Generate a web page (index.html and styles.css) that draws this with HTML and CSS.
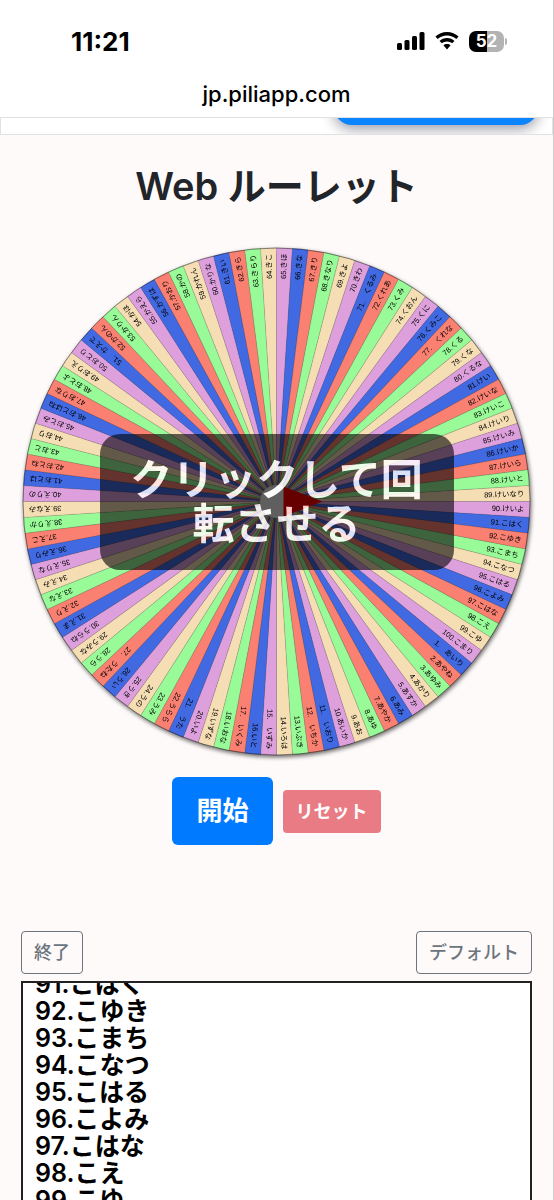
FILE: index.html
```
<!DOCTYPE html>
<html lang="ja">
<head>
  <meta charset="UTF-8">
  <meta name="viewport" content="width=device-width, initial-scale=1.0">
  <title>Web ルーレット</title>
  <link rel="stylesheet" href="styles.css">
</head>
<body>
  <header>
    <div class="status">
      <span class="time">11:21</span>
      <div class="icons">
        <svg width="28" height="20" viewBox="0 0 28 20" aria-hidden="true">
          <rect x="0" y="12" width="5" height="7" rx="1.5"/>
          <rect x="7.5" y="9" width="5" height="10" rx="1.5"/>
          <rect x="15" y="5" width="5" height="14" rx="1.5"/>
          <rect x="22.5" y="1" width="5" height="18" rx="1.5"/>
        </svg>
        <svg width="24" height="20" viewBox="0 0 24 20" aria-hidden="true">
          <path d="M12 1C7.500 1 3.400 2.700.4 5.600L2.700 8C5.200 5.700 8.400 4.400 12 4.400S18.800 5.700 21.300 8L23.600 5.600C20.600 2.700 16.500 1 12 1Z"/>
          <path d="M12 7.100C9.100 7.100 6.500 8.200 4.500 10L6.900 12.300C8.300 11.100 10 10.400 12 10.400S15.700 11.100 17.100 12.300L19.500 10C17.500 8.200 14.900 7.100 12 7.100Z"/>
          <path d="M12 13C10.600 13 9.400 13.500 8.400 14.300L12 18.500L15.600 14.300C14.600 13.500 13.400 13 12 13Z"/>
        </svg>
        <span class="battery">52</span>
      </div>
    </div>
    <p class="url">jp.piliapp.com</p>
  </header>
  <div class="ad"><a class="ad-link" href="#" aria-label="広告"></a></div>
  <main>
    <h1>Web ルーレット</h1>
    <div class="roulette">
      <svg class="wheel" viewBox="-512 -512 1024 1024">
        <g id="slices"></g>
        <circle class="edge" r="508"/>
        <circle class="hub" r="33"/>
        <path class="pointer" d="M14 -30L92 0L14 30Z"/>
      </svg>
      <button class="spin" type="button">クリックして回転させる</button>
    </div>
    <div class="actions">
      <button class="start" type="button">開始</button>
      <button class="reset" type="button">リセット</button>
    </div>
    <div class="tools">
      <button class="outline" type="button">終了</button>
      <button class="outline" type="button">デフォルト</button>
    </div>
    <textarea id="names" aria-label="項目" spellcheck="false"></textarea>
  </main>
  <script src="script.js"></script>
</body>
</html>
```
FILE: styles.css
```
*{
  box-sizing: border-box;
}
body{
  margin: 0;
  height: 100vh;
  overflow: hidden;
  background-color: #fffafa;
  border-right: 1px solid #ccc;
  font-family: Inter, "Noto Sans CJK JP", sans-serif;
  color: #212529;
}
button{
  font-family: inherit;
  cursor: pointer;
}
/* ステータスバー */
header{
  height: 117px;
  padding-top: 24px;
  background-color: white;
  color: black;
}
.status{
  display: flex;
  justify-content: space-between;
  align-items: center;
  height: 34px;
  padding: 0 49px 0 71px;
}
.time{
  font-size: 26px;
  font-weight: 700;
}
.icons{
  display: flex;
  align-items: center;
  gap: 10px;
}
.battery{
  position: relative;
  width: 35px;
  height: 21px;
  border-radius: 7px;
  background: linear-gradient(to right, black 52%, #b3b3b3 52%);
  color: white;
  font-size: 17px;
  font-weight: 700;
  line-height: 21px;
  text-align: center;
}
.battery::after{
  content: "";
  position: absolute;
  left: 36px;
  top: 7px;
  width: 2px;
  height: 7px;
  border-radius: 0 2px 2px 0;
  background-color: #b3b3b3;
}
.url{
  margin: 20px 0 0;
  font-size: 22px;
  font-weight: 500;
  line-height: 32px;
  text-align: center;
}
/* 広告 */
.ad{
  display: flex;
  justify-content: flex-end;
  height: 18px;
  padding-right: 14px;
  overflow: hidden;
  background-color: white;
  border: 1px solid #e2e2e4;
}
.ad-link{
  width: 38%;
  height: 60px;
  margin-top: -53px;
  border-radius: 18px;
  background-color: #0a84ff;
  box-shadow: 0 4px 14px rgba(0, 0, 40, .4);
}
main{
  padding: 0 21px;
}
h1{
  margin: 27px 0 36px;
  font-size: 38px;
  font-weight: 600;
  line-height: 48px;
  text-align: center;
}
/* ルーレット */
.roulette{
  position: relative;
}
.wheel{
  display: block;
  width: 100%;
  overflow: visible;
  filter: drop-shadow(1px 2px 2px rgba(0, 0, 0, .6));
}
.slice{
  stroke: rgba(0, 0, 0, .2);
  stroke-width: 1;
}
.label{
  font-family: "Liberation Sans", "Noto Sans CJK JP", sans-serif;
  font-size: 15px;
  fill: black;
  text-anchor: end;
  dominant-baseline: central;
  white-space: pre;
}
.edge{
  fill: none;
  stroke: rgba(0, 0, 0, .4);
  stroke-width: 2;
}
.hub{
  fill: #eee;
}
.pointer{
  fill: red;
}
.spin{
  position: absolute;
  top: 50%;
  left: 50%;
  width: 354px;
  padding: 24px;
  transform: translate(-50%, -50%);
  border: none;
  border-radius: 20px;
  background-color: rgba(0, 0, 0, .75);
  color: white;
  opacity: .8;
  font-size: 42px;
  font-weight: 600;
  line-height: 44px;
}
.actions{
  display: flex;
  justify-content: center;
  align-items: center;
  gap: 10px;
  margin-top: 20px;
}
.start{
  padding: 14px 24px;
  border: none;
  border-radius: 6px;
  background-color: #007bff;
  color: white;
  font-size: 26px;
  font-weight: 600;
  line-height: 40px;
}
.reset{
  padding: 8px 13px;
  border: none;
  border-radius: 4px;
  background-color: #e97b85;
  color: white;
  font-size: 18px;
  font-weight: 600;
  line-height: 27px;
}
.tools{
  display: flex;
  justify-content: space-between;
  margin: 86px 0 7px;
}
.outline{
  padding: 7px 12px;
  border: 1px solid #6c757d;
  border-radius: 4px;
  background-color: transparent;
  color: #6c757d;
  font-size: 18px;
  font-weight: 500;
  line-height: 27px;
}
/* 項目リスト */
#names{
  display: block;
  width: 100%;
  height: 240px;
  padding: 8px 12px;
  border: 2px solid #222;
  border-radius: 0;
  outline: none;
  resize: none;
  scrollbar-width: none;
  background-color: white;
  color: black;
  font-family: inherit;
  font-size: 25px;
  font-weight: 600;
  line-height: 27px;
}
```
FILE: script.js
```
const names=[
  "　あいり","あやね","あゆみ","あかり","あすか","あみ","あやか","あゆ","あお","あいか",
  "　いおり","　いちか","いぶき","いろは","　いずみ","いと","　いくみ","いおな","いずな","いよ",
  "　うた","うらら","うみ","うの","うき","うい","　うたね","うら","うみな","うらね",
  "えま","えり","えな","えみ","えりな","えみり","えこ","えりか","えなみ","えりの",
  "おとは","おとね","おと","おり","おとみ","おとはね","おりな","おとよ","おりえ","おとり",
  "　かえで","かのん","かりん","かほ","かえら","かずは","かおり","かの","かれん","かりな",
  "きい","きら","きらり","きこ","きほ","きな","きり","きなり","きよ","きわ",
  "　くるみ","くれあ","くみ","くおん","くに","くみこ","　くれな","くる","くな","くるな",
  "けい","けいな","けいこ","けいり","けいみ","けいか","けいら","けいと","けいなり","けいよ",
  "こはく","こゆき","こまち","こなつ","こはる","こよみ","こはな","こえ","こゆ","こまり"
]
const colors=["plum","royalblue","salmon","palegreen","wheat"]
const svgNS="http://www.w3.org/2000/svg"
const slices=document.querySelector("#slices")
const list=document.querySelector("#names")

const R=508
const step=360/names.length
const half=step/2*Math.PI/180
const x=R*Math.cos(half)
const y=R*Math.sin(half)

// ルーレットの項目を描く
names.forEach((name,i)=>{
  const num=i+1
  const g=document.createElementNS(svgNS,"g")
  g.setAttribute("transform",`rotate(${(num-90+0.5)*step})`)

  const slice=document.createElementNS(svgNS,"path")
  slice.setAttribute("class","slice")
  slice.setAttribute("d",`M0 0L${x} ${-y}A${R} ${R} 0 0 1 ${x} ${y}Z`)
  slice.setAttribute("fill",colors[num%5])
  g.appendChild(slice)

  const label=document.createElementNS(svgNS,"text")
  label.setAttribute("class","label")
  label.setAttribute("x",497)
  label.textContent=`${num}.${name}`
  g.appendChild(label)

  slices.appendChild(g)
})

// リストを最後の方までスクロール
list.value=names.map((name,i)=>`${i+1}.${name}`).join("\n")
list.scrollTop=2450
```
